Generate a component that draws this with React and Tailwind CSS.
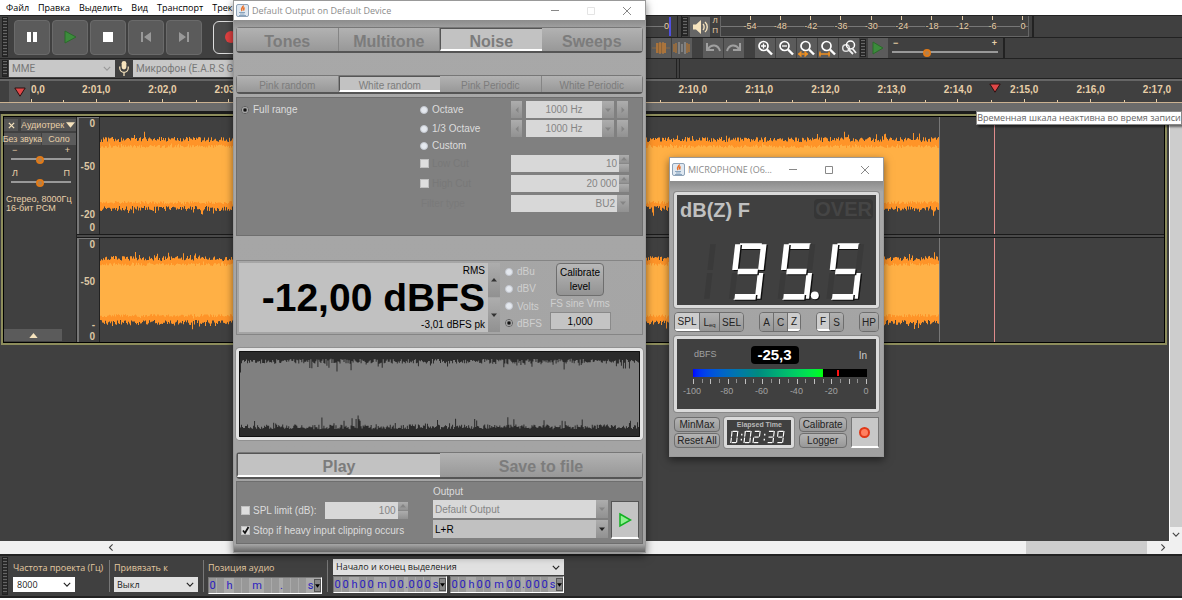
import React from "react";

const menu = ["Файл", "Правка", "Выделить", "Вид", "Транспорт", "Трек"];
// the empty marks lie under the generator window
const seconds = ["2:01,0", "2:02,0", "2:03,0", "", "", "", "", "", "", "2:10,0", "2:11,0", "2:12,0", "2:13,0", "2:14,0", "2:15,0", "2:16,0", "2:17,0"];
const meterMarks = ["-54", "-48", "-42", "-36", "-30", "-24", "-18", "-12", "-6", "0"];

// small seeded generator, so the noise looks the same on every load
const makeRandom = (seed) => () => {
  seed = (seed * 16807) % 2147483647;
  return seed / 2147483647;
};

const noiseBand = (seed, width, top, bottom, spread, spike) => {
  const rnd = makeRandom(seed);
  const jitter = () => rnd() * spread + (rnd() > 0.9 ? rnd() * spike : 0);
  const upper = [];
  const lower = [];
  for (let x = 0; x < width; x++) {
    const y1 = (top - jitter()).toFixed(1);
    const y2 = (bottom + jitter()).toFixed(1);
    upper.push(`${x},${y1} ${x + 1},${y1}`);
    lower.unshift(`${x + 1},${y2} ${x},${y2}`);
  }
  return `M${upper.join(" L")} L${lower.join(" L")} Z`;
};

const Grip = () => (
  <span className="w-[6px] shrink-0 self-stretch my-px border border-[#222] bg-[repeating-linear-gradient(#666_0_1px,#2c2c2c_1px_3px)]" />
);

const Chevron = ({ className = "" }) => (
  <svg viewBox="0 0 10 6" className={`w-2 h-[5px] shrink-0 pointer-events-none ${className}`} fill="none" stroke="currentColor" strokeWidth="1.4">
    <path d="M1 1l4 4 4-4" />
  </svg>
);

const TransportButton = ({ label, children }) => (
  <button aria-label={label} className="w-[36px] h-[35px] rounded-sm bg-[#5b5b5b] border border-[#6a6a6a] grid place-items-center shrink-0">
    <svg viewBox="0 0 16 16" className="w-4 h-4">{children}</svg>
  </button>
);

const ToolButton = ({ label, className = "", children }) => (
  <button aria-label={label} className={`w-[20px] h-[20px] shrink-0 bg-[#5b5b5b] grid place-items-center ${className}`}>
    <svg viewBox="0 0 18 18" className="w-[18px] h-[18px]" fill="none">{children}</svg>
  </button>
);

const Lens = ({ children }) => (
  <>
    <circle cx="7.5" cy="7" r="4.5" stroke="#fff" strokeWidth="1.7" />
    <path d="M11 10.5l5 5" stroke="#fff" strokeWidth="2.4" />
    {children}
  </>
);

const Range = ({ label, value, className = "" }) => (
  <input
    type="range"
    aria-label={label}
    defaultValue={value}
    className={`appearance-none block w-full h-[9px] bg-[linear-gradient(#404040_3px,#999_3px,#999_5px,#404040_5px)] [&::-webkit-slider-thumb]:appearance-none [&::-webkit-slider-thumb]:w-[8px] [&::-webkit-slider-thumb]:h-[8px] [&::-webkit-slider-thumb]:rounded-full [&::-webkit-slider-thumb]:bg-[#b08050] [&::-webkit-slider-thumb]:border-2 [&::-webkit-slider-thumb]:border-[#e07a18] ${className}`}
  />
);

const TransportBar = () => (
  <div className="w-[641px] shrink-0 h-[44px] flex items-center border-t border-b border-[#222] pl-[2px]">
    <Grip />
    <div className="flex gap-[2px] ml-[6px]">
      <TransportButton label="Пауза"><path d="M3 3h4v10H3zM9 3h4v10H9z" fill="#fff" /></TransportButton>
      <TransportButton label="Воспроизвести"><path d="M3 2l11 6-11 6z" fill="#3c8c3c" stroke="#2b6b2b" /></TransportButton>
      <TransportButton label="Стоп"><path d="M3 3h10v10H3z" fill="#fff" /></TransportButton>
      <TransportButton label="В начало"><path d="M3 3h2v10H3zM13 3v10L6 8z" fill="#999" /></TransportButton>
      <TransportButton label="В конец"><path d="M11 3h2v10h-2zM3 3v10l7-5z" fill="#999" /></TransportButton>
    </div>
    <button aria-label="Запись" className="ml-[11px] w-[36px] h-[33px] rounded-md bg-[#4a4a4a] border border-[#ddd] grid place-items-center">
      <span className="w-3 h-3 rounded-full bg-[#e04040]" />
    </button>
  </div>
);

const MeterBar = () => (
  <div className="h-[22px] flex items-stretch border-t border-[#222] text-[9px] text-[#e8cfa8]">
    <div className="w-[37px] flex items-center justify-end pr-[6px] border-r border-[#222]">
      <span className="h-px flex-1 bg-[#777]" />
      <span>0</span>
      <span className="w-[2px] h-[19px] bg-[#5050e0]" />
    </div>
    <span className="w-[4px] border-r border-[#222]" />
    <Grip />
    <button aria-label="Уровень воспроизведения" className="w-[20px] h-[20px] my-auto ml-[2px] bg-[#666] grid place-items-center">
      <svg viewBox="0 0 18 18" className="w-[18px] h-[18px]" fill="none">
        <path d="M2 6.500h3l5-4.500v14l-5-4.500H2z" fill="#f6e3bd" />
        <path d="M12 6c1.500 1.500 1.500 4.500 0 6M14 4c3 2.500 3 7.500 0 10" stroke="#f6e3bd" strokeWidth="1.400" />
      </svg>
    </button>
    <div className="w-[10px] flex flex-col items-center leading-[10px] text-[8px]">
      <span>Л</span>
      <span>П</span>
    </div>
    <div className="relative w-[309px] border-x border-b border-[#666] pl-[24px] flex justify-between">
      <span className="absolute inset-x-0 top-[10px] h-px bg-[#777]" />
      {meterMarks.map((m) => (
        <span key={m} className="relative w-[10px] flex flex-col items-center leading-[13px]">
          <i className="w-px h-[4px] shrink-0 bg-[#e8cfa8]" />
          <span className="bg-[#404040]">{m}</span>
        </span>
      ))}
    </div>
    <span className="w-[5px] border-r-2 border-[#222]" />
  </div>
);

const EditBar = () => (
  <div className="h-[22px] flex items-center border-t border-b border-[#222]">
    <ToolButton label="Обрезать" className="ml-[10px]">
      <path d="M0 9h18" stroke="#8a6a48" />
      <path d="M4 4v10h10V4z" fill="#8a6238" />
      <path d="M5 4v10M8 3v12M11 3v12M13 4v10" stroke="#c98540" />
    </ToolButton>
    <ToolButton label="Тишина" className="ml-px">
      <path d="M1 5v8M3 4v10M14 4v10M16 5v8" stroke="#a5713a" strokeWidth="1.500" />
      <path d="M6 3v12M9 5v8M12 3v12" stroke="#999" strokeWidth="1.200" />
    </ToolButton>
    <ToolButton label="Отменить" className="ml-[11px]"><path d="M3 4v7h7M4 10c3-5 10-5 12 2" stroke="#a0a0a0" strokeWidth="2" /></ToolButton>
    <ToolButton label="Вернуть" className="ml-px"><path d="M15 4v7H8M14 10c-3-5-10-5-12 2" stroke="#a0a0a0" strokeWidth="2" /></ToolButton>
    <div className="flex gap-px ml-[11px]">
      <ToolButton label="Приблизить"><Lens><path d="M5 7h5M7.500 4.500v5" stroke="#fff" strokeWidth="1.300" /></Lens></ToolButton>
      <ToolButton label="Отдалить"><Lens><path d="M5 7h5" stroke="#fff" strokeWidth="1.300" /></Lens></ToolButton>
      <ToolButton label="Показать выделение"><Lens><path d="M0 15h10M3.500 12.500L1 15l2.500 2.500M6.500 12.500L9 15l-2.500 2.500" stroke="#f09020" strokeWidth="1.500" /></Lens></ToolButton>
      <ToolButton label="Показать весь проект"><Lens><path d="M0 15h11M1 12.500v5M10 12.500v5" stroke="#f09020" strokeWidth="1.500" /></Lens></ToolButton>
      <ToolButton label="Переключить масштаб">
        <circle cx="6" cy="9" r="3.300" stroke="#ddd" strokeWidth="1.500" />
        <circle cx="10.500" cy="6" r="4" stroke="#fff" strokeWidth="1.500" />
        <path d="M8 10l5 5M12 9l4 5" stroke="#eee" strokeWidth="1.800" />
      </ToolButton>
    </div>
    <span className="w-px" />
    <Grip />
    <ToolButton label="Воспроизвести на скорости" className="ml-[2px]"><path d="M4 3l10 6-10 6z" fill="#3c8c3c" stroke="#2b6b2b" /></ToolButton>
    <div className="w-[106px] ml-[4px] text-[9px] leading-[9px] font-bold text-[#e8cfa8]">
      <div className="flex justify-between px-px"><span>−</span><span>+</span></div>
      <Range label="Скорость" value={32} />
    </div>
    <span className="w-[7px] h-full border-r-2 border-[#222]" />
  </div>
);

const DeviceBar = () => (
  <div className="h-[20px] flex items-center pl-[2px] border-b border-[#222] text-[#777] text-[10px] font-[Roboto,sans-serif]">
    <Grip />
    <label className="ml-px w-[106px] h-[17px] bg-[#c8c8c8] flex items-center pr-1">
      <select aria-label="Аудиоинтерфейс" className="appearance-none flex-1 pl-[3px] outline-none">
        <option>MME</option>
      </select>
      <Chevron className="text-[#999]" />
    </label>
    <svg viewBox="0 0 12 18" className="w-[12px] h-[17px] mx-[3px] shrink-0" fill="none">
      <rect x="3.500" y="1" width="5" height="9" rx="2.500" fill="#f6e3bd" />
      <path d="M1.500 7v1.500a4.500 4.500 0 0 0 9 0V7M6 13v4" stroke="#f6e3bd" strokeWidth="1.300" />
    </svg>
    <select aria-label="Устройство записи" className="appearance-none w-[506px] h-[17px] bg-[#c8c8c8] pl-[3px] outline-none">
      <option>Микрофон (E.A.R.S Gain)</option>
    </select>
    <span className="w-[38px] h-full border-r border-[#222]" />
    <span className="w-[3px] h-full border-r border-[#222]" />
  </div>
);

const Pin = ({ className = "" }) => (
  <svg viewBox="0 0 12 10" className={`w-3 h-[10px] ${className}`}>
    <path d="M.800 1h10.400L6 9.200z" fill="#e04848" stroke="#2a1010" />
  </svg>
);

const Timeline = () => (
  <div className="relative overflow-hidden">
    <div className="h-[24px] border-t-2 border-[#666] border-b border-b-[#cbb292] flex text-[10px] font-bold text-[#e8cfa8]">
      <button aria-label="Закрепить указатель" className="ml-[9px] w-[21px] shrink-0 bg-[#585858] grid place-items-center"><Pin /></button>
      <div className="w-[33px] shrink-0 border-l border-transparent flex flex-col justify-between">
        <span className="leading-[18px]">0,0</span>
        <i className="w-px h-[3px] bg-[#e8cfa8]" />
      </div>
      <div className="flex-1 grid grid-cols-17 -mr-[8px]">
        {seconds.map((s, i) => (
          <div key={i} className="relative flex flex-col items-center justify-between">
            <span className="leading-[18px]">{s}</span>
            <i className="w-px h-[3px] bg-[#e8cfa8]" />
            <i className="absolute left-0 bottom-0 w-px h-[2px] bg-[#e8cfa8]" />
          </div>
        ))}
      </div>
    </div>
    <Pin className="absolute left-[989px] top-[4px]" />
    <div className="h-[8px] bg-[#6b6b6b]" />
    <div className="h-[3px] bg-[#1c1c1c]" />
  </div>
);

const Channel = ({ className, seed, height, outer, inner, children }) => (
  <div className={`flex ${className}`}>
    <div className="w-[22px] shrink-0 border-l-2 border-t border-[#777] bg-[#404040] pr-[4px] text-right text-[10px] leading-3 font-bold text-[#dcc7a4]">
      {children}
    </div>
    <div className="relative flex-1 bg-[#404040] border-l border-[#222]">
      <svg width="840" height={height} className="block border-r border-[#777]">
        <path d={noiseBand(seed, 840, outer[0], outer[1], 5, 6)} fill="#ff9428" />
        <path d={noiseBand(seed + 7, 840, inner[0], inner[1], 3, 2)} fill="#ffb045" />
      </svg>
      <span className="absolute top-0 bottom-0 left-[894px] w-px bg-[#e08c8c]" />
    </div>
  </div>
);

const TrackPanel = () => (
  <div className="w-[73px] shrink-0 flex flex-col bg-[#404040] text-[#e8cfa8] text-[9px] pb-px border-r border-[#222]">
    <div className="flex gap-[3px] mt-[2px]">
      <button aria-label="Закрыть дорожку" className="w-[14px] h-[12px] bg-[#555] grid place-items-center">
        <svg viewBox="0 0 8 8" className="w-[7px] h-[7px]" stroke="#f6e3bd" strokeWidth="1.500"><path d="M1 1l6 6M7 1L1 7" /></svg>
      </button>
      <button className="flex-1 h-[12px] bg-[#555] leading-3 flex items-center justify-between pr-px">
        Аудиотрек
        <svg viewBox="0 0 10 6" className="w-[9px] h-[6px] shrink-0"><path d="M0 0h10L5 6z" fill="#f6e3bd" /></svg>
      </button>
    </div>
    <div className="flex gap-px mt-[2px] whitespace-nowrap leading-3">
      <button className="w-[37px] h-[12px] bg-[#555] flex justify-center">Без звука</button>
      <button className="flex-1 h-[12px] bg-[#5b5b5b]">Соло</button>
    </div>
    <div className="w-[60px] ml-[7px] mt-px leading-[9px]">
      <div className="flex justify-between px-px"><span>−</span><span>+</span></div>
      <Range label="Усиление" value={49} />
      <div className="flex justify-between px-px mt-[5px]"><span>Л</span><span>П</span></div>
      <Range label="Панорама" value={49} />
    </div>
    <p className="ml-[2px] mt-[8px] leading-[9px] whitespace-nowrap">Стерео, 8000Гц<br />16-бит PCM</p>
    <button aria-label="Свернуть" className="mt-auto w-[58px] h-[12px] bg-[#5b5b5b] grid place-items-center">
      <svg viewBox="0 0 10 6" className="w-[9px] h-[5px]"><path d="M0 6h10L5 0z" fill="#f6e3bd" /></svg>
    </button>
  </div>
);

const Tracks = () => (
  <div className="flex-1 flex">
    <div className="flex-1 min-w-0">
      <div className="ml-px mr-[2px] border-2 border-[#8d8d5c] flex overflow-hidden">
        <div className="flex-1 min-w-0 flex border border-black">
          <TrackPanel />
          <div className="flex-1 min-w-0">
            <Channel className="h-[117px]" seed={2021} height={117} outer={[25, 89]} inner={[31, 84]}>
              <div>0</div>
              <div className="mt-[31px]">-50</div>
              <div className="mt-[36px]">-20</div>
              <div className="mt-px">0</div>
            </Channel>
            <div className="h-[4px] border-y border-[#1a1a1a] bg-[#4a4a4a]" />
            <Channel className="h-[104px]" seed={7717} height={104} outer={[23, 82]} inner={[28, 76]}>
              <div>0</div>
              <div className="mt-[25px]">-50</div>
              <div className="mt-[31px]">-</div>
              <div>0</div>
            </Channel>
          </div>
        </div>
      </div>
    </div>
    <div className="w-[13px] bg-[#f0f0f0] border-l border-[#fff] flex flex-col">
      <div className="flex-1 bg-[#cdcdcd]" />
      <div className="h-[14px] grid place-items-center text-[#444]"><Chevron /></div>
    </div>
  </div>
);

const timeWidths = { h: "w-[9px]", m: "w-[14px]", ".": "w-[3px]", s: "w-[7px]" };

const TimeField = ({ label, text }) => (
  <div role="group" aria-label={label} className="w-[114px] h-[17px] bg-[#aaa] border-t border-l border-[#777] border-r border-b border-r-white border-b-white flex items-stretch text-[11px] leading-4 text-[#2a20c0] font-[Roboto,sans-serif]">
    {text.split("").map((c, i) => (
      <span key={i} className={`text-center shrink-0 ${timeWidths[c] || "w-[8px] bg-[#989898] border-r border-[#aaa]"}`}>{c}</span>
    ))}
    <button aria-label="Формат времени" className="ml-auto w-[7px] my-px bg-[#888] border border-[#555] grid place-items-center shrink-0">
      <svg viewBox="0 0 6 4" className="w-[5px] h-1"><path d="M0 0h6L3 4z" /></svg>
    </button>
  </div>
);

const SelectionBar = () => (
  <div className="bg-white pb-[2px]">
    <div className="h-[44px] bg-[#404040] flex border-y-2 border-[#222] pl-[2px] text-[9px] text-[#e3c9a0] font-['Open_Sans',sans-serif]">
      <Grip />
      <div className="ml-[5px] w-[97px] border-r border-[#777] my-[4px] flex flex-col gap-[2px]">
        <label htmlFor="rate" className="leading-[15px] whitespace-nowrap">Частота проекта (Гц)</label>
        <div className="w-[62px] h-[17px] bg-white text-[#222] flex items-center pr-1">
          <select id="rate" className="appearance-none flex-1 pl-[4px] outline-none"><option>8000</option></select>
          <Chevron />
        </div>
      </div>
      <div className="pl-[4px] w-[94px] border-r border-[#777] my-[4px] flex flex-col gap-[2px]">
        <label htmlFor="snap" className="leading-[15px]">Привязать к</label>
        <div className="w-[84px] h-[17px] bg-[#e1e1e1] text-[#222] flex items-center pr-1">
          <select id="snap" className="appearance-none flex-1 pl-[3px] outline-none"><option>Выкл</option></select>
          <Chevron />
        </div>
      </div>
      <div className="pl-[4px] w-[124px] border-r border-[#777] my-[4px] flex flex-col gap-[2px]">
        <span className="leading-[15px]">Позиция аудио</span>
        <TimeField label="Позиция аудио" text={"0\u00a0h\u00a0\u00a0m\u00a0\u00a0.\u00a0\u00a0\u00a0s"} />
      </div>
      <div className="ml-[5px] my-[3px] flex flex-col gap-px">
        <div className="w-[231px] h-[17px] bg-[#e1e1e1] text-[#222] flex items-center pr-1">
          <select aria-label="Режим выделения" className="appearance-none flex-1 pl-[3px] outline-none"><option>Начало и конец выделения</option></select>
          <Chevron />
        </div>
        <div className="flex justify-between">
          <TimeField label="Начало выделения" text="00h00m00.000s" />
          <TimeField label="Конец выделения" text="00h00m00.000s" />
        </div>
      </div>
    </div>
  </div>
);

const TitleBar = ({ title, className, controls }) => (
  <div className={`bg-white flex items-center pl-[2px] text-[#8c8c8c] text-[9px] font-['Open_Sans',sans-serif] whitespace-nowrap ${className}`}>
    <svg viewBox="0 0 13 13" className="w-[13px] h-[13px] mr-[3px] shrink-0" fill="none">
      <rect x=".500" y=".500" width="12" height="12" rx="1.500" fill="#dfe8f1" stroke="#8fa3b8" />
      <path d="M7 1.500c1 1.500-3 2.500-1 5.500M8.500 3.500c-1.500 1-1 1.500-.500 3" stroke="#e8702a" strokeWidth="1.600" />
      <path d="M3 8.500h6M4 10h4.500M3 11.500h7" stroke="#7f9cb8" strokeWidth=".900" />
    </svg>
    <span className="flex-1">{title}</span>
    <div className={`flex ${controls}`}>
      <button aria-label="Minimize"><svg viewBox="0 0 8 8" className="w-2 h-2" stroke="#888"><path d="M0 3.500h8" /></svg></button>
      <button aria-label="Maximize"><svg viewBox="0 0 8 8" className="w-2 h-2" fill="none" stroke="currentColor"><path d="M.500.500h7v7h-7z" /></svg></button>
      <button aria-label="Close"><svg viewBox="0 0 8 8" className="w-2 h-2" stroke="#888"><path d="M0 0l8 8M8 0L0 8" /></svg></button>
    </div>
  </div>
);

const Tabs = ({ items, active, className }) => (
  <div role="tablist" className={`flex rounded-sm border border-[#777] border-b-2 border-b-[#555] text-[#7c7c7c] ${className}`}>
    {items.map((t) => (
      <button
        key={t}
        role="tab"
        aria-selected={t === active}
        className={
          t === active
            ? "flex-1 pt-px bg-[#c2c2c2] border-t border-l border-[#555] border-b-2 border-b-white"
            : "flex-1 pt-[2px] bg-linear-to-b from-[#b2b2b2] to-[#989898] border-r border-[#858585] last:border-r-0"
        }
      >
        {t}
      </button>
    ))}
  </div>
);

const Radio = ({ label, name, checked, className = "text-[#dcdcdc]" }) => (
  <label className={`flex items-center gap-[4px] ${className}`}>
    <input type="radio" name={name} defaultChecked={checked} className="appearance-none w-2 h-2 rounded-full bg-[#e4e8ee] border border-[#c4c8d0] checked:bg-[radial-gradient(#111_1px,#e4e4e4_3px)] checked:border-[#555]" />
    {label}
  </label>
);

const Check = ({ label, checked, className = "text-[#dcdcdc]" }) => (
  <label className={`relative flex items-center gap-[3px] ${className}`}>
    <input type="checkbox" defaultChecked={checked} className="peer appearance-none w-[9px] h-[9px] bg-[#dedede] border border-[#c0c0c0]" />
    {checked && (
      <svg viewBox="0 0 9 9" className="absolute left-0 w-[9px] h-[9px] hidden peer-checked:block pointer-events-none" fill="none" stroke="#111" strokeWidth="1.800"><path d="M2 4.500l2 2.500 3.500-6" /></svg>
    )}
    {label}
  </label>
);

const Arrow = ({ d, color = "#858585" }) => (
  <svg viewBox="0 0 6 6" className="w-[6px] h-[6px]" fill={color}><path d={d} /></svg>
);

const UP = "M0 4.500h6L3 1z";
const DOWN = "M0 1.500h6L3 5z";

const knob = "bg-linear-to-b from-[#adadad] to-[#919191] grid place-items-center shrink-0";

const Spinner = () => (
  <span className="w-[10px] flex flex-col gap-px shrink-0 bg-[#888]">
    <button aria-label="Increase" className={`flex-1 ${knob}`}><Arrow d={UP} /></button>
    <button aria-label="Decrease" className={`flex-1 ${knob}`} />
  </span>
);

const BandPicker = ({ label }) => (
  <div className="flex h-[17px]">
    <button aria-label="Previous band" className={`w-[11px] ${knob}`}><Arrow d="M4.500 0v6L1.500 3z" /></button>
    <select aria-label={label} className="appearance-none w-[76px] ml-[4px] bg-[#d8d8d8] text-[#858585] text-center outline-none"><option>1000 Hz</option></select>
    <span className={`w-[12px] ${knob}`}><Arrow d={DOWN} /></span>
    <button aria-label="Next band" className={`w-[11px] ml-[3px] ${knob}`}><Arrow d="M1.500 0v6l3-3z" /></button>
  </div>
);

const NumberField = ({ label, value, className = "" }) => (
  <div className={`flex h-[17px] ${className}`}>
    <input aria-label={label} defaultValue={value} className="min-w-0 flex-1 bg-[#d8d8d8] text-[#858585] text-right px-[2px] outline-none" />
    <Spinner />
  </div>
);

const scopePath = noiseBand(311, 397, 12, 74, 5, -9);

const GeneratorWindow = () => (
  <div className="absolute left-[233px] top-0 w-[413px] border border-[#999] bg-[#a3a3a3] shadow-[0_3px_8px_rgba(0,0,0,0.5)] text-[10px]">
    <TitleBar title="Default Output on Default Device" className="h-[19px]" controls="gap-[28px] pr-[14px] text-[#e4e4e4]" />
    <div className="bg-linear-to-b from-[#8c8c8c] via-[#a8a8a8] via-2% to-[#a3a3a3] px-[2px] pt-[7px] pb-px">
      <Tabs items={["Tones", "Multitone", "Noise", "Sweeps"]} active="Noise" className="h-[26px] text-[16px] font-bold" />
      <Tabs items={["Pink random", "White random", "Pink Periodic", "White Periodic"]} active="White random" className="mt-[22px] h-[19px]" />

      <div className="mt-[3px] h-[139px] bg-[#808080] border border-[#6e6e6e] grid grid-cols-[179px_91px_118px] grid-rows-[19px_19px_15px_20px_20px_20px] items-center content-start pl-[4px] pt-[2px]">
        <Radio name="band" label="Full range" checked />
        <Radio name="band" label="Octave" />
        <BandPicker label="Octave band" />
        <Radio name="band" label="1/3 Octave" className="col-start-2 text-[#dcdcdc] whitespace-nowrap" />
        <BandPicker label="Third octave band" />
        <Radio name="band" label="Custom" className="col-start-2 text-[#dcdcdc]" />
        <Check label="Low Cut" className="col-start-2 row-start-4 text-[#787878]" />
        <NumberField label="Low cut frequency" value="10" className="col-start-3 row-start-4" />
        <Check label="High Cut" className="col-start-2 row-start-5 text-[#787878]" />
        <NumberField label="High cut frequency" value="20 000" className="col-start-3 row-start-5" />
        <span className="col-start-2 row-start-6 text-[#7a7a7a] pl-px">Filter type</span>
        <div className="col-start-3 row-start-6 flex h-[17px]">
          <select aria-label="Filter type" className="appearance-none flex-1 bg-[#d8d8d8] text-[#858585] text-right px-[2px] outline-none"><option>BU2</option></select>
          <span className={`w-[12px] ${knob}`}><Arrow d={DOWN} /></span>
        </div>
      </div>

      <div className="mt-[24px] h-[75px] border border-[#858585] flex p-[2px]">
        <div className="w-[249px] bg-[#c1c1c1] text-black text-right pr-[3px] flex flex-col">
          <span className="leading-[16px]">RMS</span>
          <span className="text-[39px] leading-[38px] font-bold whitespace-nowrap">-12,00 dBFS</span>
          <span className="leading-[15px]">-3,01 dBFS pk</span>
        </div>
        <div className="w-[12px] flex flex-col gap-px">
          <button aria-label="Level up" className={`flex-1 ${knob}`}><Arrow d={UP} color="#333" /></button>
          <button aria-label="Level down" className={`flex-1 ${knob}`}><Arrow d={DOWN} color="#333" /></button>
        </div>
        <div className="w-[45px] ml-[5px] flex flex-col justify-between leading-[17px] text-[#cfcfcf]">
          <Radio name="unit" label="dBu" className="" />
          <Radio name="unit" label="dBV" className="" />
          <Radio name="unit" label="Volts" className="" />
          <Radio name="unit" label="dBFS" className="" checked />
        </div>
        <div className="w-[60px] flex flex-col items-center">
          <button className="w-[48px] h-[33px] rounded-sm border border-[#6e6e6e] bg-linear-to-b from-[#b8b8b8] to-[#939393] text-black leading-[14px]">Calibrate level</button>
          <label htmlFor="vrms" className="leading-4 text-[#cfcfcf] whitespace-nowrap">FS sine Vrms</label>
          <input id="vrms" defaultValue="1,000" className="w-[61px] h-[18px] bg-[#c4c4c4] border border-[#8a8a8a] text-center text-black outline-none" />
        </div>
      </div>

      <div className="mt-[13px] rounded-sm border-[3px] border-[#e4e4e4] shadow-[0_0_0_1px_#909090] overflow-hidden">
        <svg viewBox="0 0 397 86" preserveAspectRatio="none" className="block w-full h-[86px] bg-[#2b2b2b] border border-[#111]">
          <path d={scopePath} fill="#808080" />
        </svg>
      </div>

      <Tabs items={["Play", "Save to file"]} active="Play" className="mt-[12px] h-[27px] text-[16px] font-bold" />

      <div className="mt-[2px] h-[63px] bg-[#808080] border border-[#6e6e6e] flex pl-[4px] text-[#dcdcdc]">
        <div className="w-[189px] flex flex-col pt-[18px]">
          <div className="flex items-center gap-[8px] h-[20px]">
            <Check label="SPL limit (dB):" />
            <NumberField label="SPL limit" value="100" className="w-[83px]" />
          </div>
          <div className="h-[20px] flex items-center whitespace-nowrap"><Check label="Stop if heavy input clipping occurs" checked /></div>
        </div>
        <div className="w-[178px] pl-[3px] flex flex-col gap-[2px]">
          <label htmlFor="device" className="leading-4 pt-[2px] h-[16px]">Output</label>
          <div className="flex h-[18px]">
            <select id="device" className="appearance-none flex-1 bg-[#d8d8d8] text-[#858585] px-[2px] outline-none"><option>Default Output</option></select>
            <span className={`w-[12px] ${knob}`}><Arrow d={DOWN} /></span>
          </div>
          <div className="flex h-[18px]">
            <select aria-label="Channels" className="appearance-none flex-1 bg-[#c1c1c1] text-black px-[2px] outline-none"><option>L+R</option></select>
            <span className={`w-[12px] ${knob}`}><Arrow d={DOWN} color="#222" /></span>
          </div>
        </div>
        <button aria-label="Start" className="w-[28px] h-[38px] ml-[3px] mt-[19px] bg-[#c4c4c4] border border-[#555] border-b-2 border-b-white grid place-items-center">
          <svg viewBox="0 0 14 16" className="w-[14px] h-4"><path d="M2 2l10.500 6L2 14z" fill="#90f090" stroke="#10b020" strokeWidth="1.500" /></svg>
        </button>
      </div>
    </div>
    <div className="h-[7px] bg-linear-to-b from-[#a0a0a0] to-[#666]" />
  </div>
);

const SEGMENTS = {
  a: [2, 0, 24, 0],
  b: [26, -2, 26, 24],
  c: [26, 27, 26, 53],
  d: [2, 51, 24, 51],
  e: [0, 27, 0, 53],
  f: [0, -2, 0, 24],
  g: [3, 25.5, 23, 25.5],
};
const LIT = { 0: "abcdef", 1: "bc", 2: "abdeg", 3: "abcdg", 5: "acdfg", 9: "abcdfg" };

// one slanted LED digit; unlit segments stay faintly visible
const Digit = ({ value, x, ghost = "#3a3a3a", only }) => (
  <g transform={`translate(${x} 11) skewX(-6.5)`} strokeWidth="5.600">
    {Object.entries(SEGMENTS).map(([k, [x1, y1, x2, y2]]) => {
      const on = (LIT[value] || "").includes(k);
      if (only && !only.includes(k)) return null;
      return (
        <g key={k}>
          {on && <line x1={x1 + 1.5} y1={y1 + 1} x2={x2 + 1.5} y2={y2 + 1} stroke="#111" />}
          <line x1={x1} y1={y1} x2={x2} y2={y2} stroke={on ? "#fff" : ghost} />
        </g>
      );
    })}
  </g>
);

const Bezel = ({ className = "", children }) => (
  <div className={`rounded-[3px] border-[3px] border-[#dadada] shadow-[0_0_0_1px_#888] bg-[#404040] ${className}`}>{children}</div>
);

const MiniButton = ({ on, className = "", children }) => (
  <button className={`h-full border-r border-[#6e6e6e] last:border-r-0 ${on ? "bg-[#cdcdcd] border-b-2 border-b-white" : "bg-linear-to-b from-[#b0b0b0] to-[#969696]"} ${className}`}>{children}</button>
);

const group = "flex h-[20px] rounded-sm border border-[#6e6e6e] overflow-hidden text-[#222]";
const plain = "rounded-sm border border-[#6e6e6e] bg-linear-to-b from-[#b4b4b4] to-[#989898] text-[#222] leading-[13px]";

const MeterWindow = () => (
  <div className="absolute left-[669px] top-[157px] w-[215px] border border-[#999] bg-[#a3a3a3] shadow-[0_3px_8px_rgba(0,0,0,0.5)] text-[10px]">
    <TitleBar title="MICROPHONE (O6..." className="h-[23px]" controls="gap-[28px] pr-[14px] text-[#888]" />
    <div className="bg-linear-to-b from-[#8c8c8c] via-[#a8a8a8] via-4% to-[#a0a0a0] px-[4px] pt-[11px] pb-[8px]">
      <Bezel className="h-[116px]">
        <div className="flex justify-between items-start text-[20px] leading-[22px] font-bold px-[3px] pt-[4px]">
          <span className="text-[#c0c0c0]">dB(Z) F</span>
          <span className="bg-[#363636] rounded-sm text-[#454545] leading-[20px] px-px">OVER</span>
        </div>
        <svg role="img" aria-label="95.5" viewBox="0 0 200 68" className="block w-full h-[68px] mt-[14px]">
          <Digit x={10} only="bc" />
          <Digit value={9} x={61} />
          <Digit value={5} x={110} />
          <circle cx="139.500" cy="61.500" r="4" fill="#111" />
          <circle cx="138.500" cy="60.500" r="4" fill="#fff" />
          <Digit value={5} x={159} />
        </svg>
      </Bezel>

      <div className="mt-[4px] flex justify-between">
        <div className={group}>
          <MiniButton on className="w-[25px]">SPL</MiniButton>
          <MiniButton className="w-[20px]">L<sub className="text-[6px]">eq</sub></MiniButton>
          <MiniButton className="w-[23px]">SEL</MiniButton>
        </div>
        <div className={group}>
          <MiniButton className="w-[14px]">A</MiniButton>
          <MiniButton className="w-[14px]">C</MiniButton>
          <MiniButton on className="w-[12px]">Z</MiniButton>
        </div>
        <div className={group}>
          <MiniButton on className="w-[13px]">F</MiniButton>
          <MiniButton className="w-[13px]">S</MiniButton>
        </div>
        <div className={group}><MiniButton className="w-[18px]">HP</MiniButton></div>
      </div>

      <Bezel className="mt-[4px] h-[76px] pl-[11px] pr-[9px] text-[9px] text-[#a0a0a0]">
        <div className="flex items-center justify-between pt-[7px] pl-[6px]">
          <span className="w-[52px]">dBFS</span>
          <span className="bg-black text-white rounded-sm w-[48px] h-[18px] text-center text-[15px] leading-[18px] font-bold">-25,3</span>
          <span className="w-[64px] text-right text-[10px] text-[#ccc]">In</span>
        </div>
        <div className="relative ml-[5px] mt-[5px] h-[8px] bg-black">
          <div className="h-full bg-linear-to-r from-[#0000ff] via-[#008a80] to-[#00ff00]" style={{ width: `${100 - 25.3}%` }} />
          <span className="absolute top-px bottom-px left-[83%] w-[2px] bg-[#ff1010]" />
        </div>
        <div className="ml-[5px] mt-[2px] flex justify-between h-[5px]">
          {Array.from({ length: 21 }, (_, i) => (
            <i key={i} className={i % 2 ? "w-px h-[4px] bg-[#909090]" : "w-px h-[5px] bg-[#c0c0c0]"} />
          ))}
        </div>
        <div className="-ml-[6px] -mr-[9px] mt-[2px] flex justify-between leading-[11px]">
          {["-100", "-80", "-60", "-40", "-20", "0"].map((n) => <span key={n} className="w-[20px] text-center">{n}</span>)}
        </div>
      </Bezel>

      <div className="mt-[5px] flex justify-between h-[31px]">
        <div className="w-[46px] flex flex-col gap-px">
          <button className={`flex-1 ${plain}`}>MinMax</button>
          <button className={`flex-1 ${plain}`}>Reset All</button>
        </div>
        <Bezel className="w-[70px] flex flex-col items-center">
          <span className="text-[7px] leading-[9px] font-bold text-[#b8b8b8] whitespace-nowrap">Elapsed Time</span>
          <svg role="img" aria-label="0:02:39" viewBox="0 0 256 68" className="w-[60px] h-[15px]">
            <Digit value={0} x={6} ghost="none" />
            <Digit value={0} x={66} ghost="none" />
            <Digit value={2} x={107} ghost="none" />
            <Digit value={3} x={171} ghost="none" />
            <Digit value={9} x={215} ghost="none" />
            <path d="M50 22v8M48 44v8M154 22v8M152 44v8" stroke="#fff" strokeWidth="6" />
          </svg>
        </Bezel>
        <div className="w-[48px] flex flex-col gap-px">
          <button className={`flex-1 ${plain}`}>Calibrate</button>
          <button className={`flex-1 ${plain}`}>Logger</button>
        </div>
        <button aria-label="Record" className="w-[28px] bg-[#c8c8c8] border border-[#777] border-b-2 border-b-white grid place-items-center">
          <span className="w-[11px] h-[11px] rounded-full border-2 border-[#e03818] bg-[#ff8060]" />
        </button>
      </div>
    </div>
  </div>
);

const App = () => (
  <div className="relative min-h-screen overflow-hidden flex flex-col bg-[#404040] font-['Liberation_Sans',Arial,sans-serif]">
    <nav className="h-[15px] bg-white flex gap-[9px] pl-[6px] text-[9px] leading-[15px] text-black font-['Open_Sans',sans-serif]">
      {menu.map((m) => <button key={m}>{m}</button>)}
    </nav>
    <div className="flex">
      <TransportBar />
      <div className="flex-1 min-w-0">
        <MeterBar />
        <EditBar />
      </div>
    </div>
    <DeviceBar />
    <Timeline />
    <Tracks />
    <div className="h-[13px] bg-[#f0f0f0] flex items-center text-[#444] pr-[13px]">
      <Chevron className="rotate-90 ml-[107px]" />
      <span className="flex-1" />
      <span className="w-[121px] h-full bg-[#cdcdcd]" />
      <Chevron className="-rotate-90 ml-[12px] mr-[2px]" />
    </div>
    <SelectionBar />
    <GeneratorWindow />
    <MeterWindow />
    <div role="tooltip" className="absolute left-[976px] top-[111px] w-[206px] h-[14px] bg-white border border-[#888] shadow-[2px_2px_2px_rgba(0,0,0,0.5)] text-center text-[9px] leading-3 text-[#666] whitespace-nowrap font-['Open_Sans',sans-serif]">
      Временная шкала неактивна во время записи
    </div>
  </div>
);

export default App;
